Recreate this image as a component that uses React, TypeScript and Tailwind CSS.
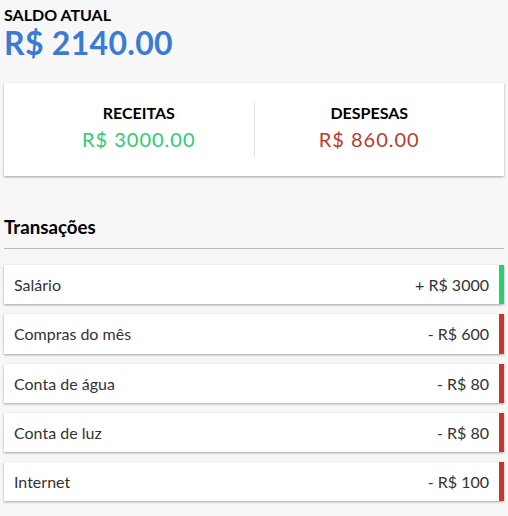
import React from "react";

const shadow = "shadow-[0_1px_3px_rgba(0,0,0,0.12),0_1px_2px_rgba(0,0,0,0.24)]";

const transactions = [
  { text: "Salário", amount: "+ R$ 3000", plus: true },
  { text: "Compras do mês", amount: "- R$ 600", plus: false },
  { text: "Conta de água", amount: "- R$ 80", plus: false },
  { text: "Conta de luz", amount: "- R$ 80", plus: false },
  { text: "Internet", amount: "- R$ 100", plus: false },
];

export default function App() {
  return (
    <div
      className="min-h-[516px] w-full bg-[#f7f7f7] px-[4px] pt-[5px] text-[#333]"
      style={{ fontFamily: "Lato, 'Open Sans', sans-serif" }}
    >
      <div className="text-[16px] font-bold uppercase leading-[1.2] text-black">Saldo atual</div>
      <div className="text-[32px] font-bold tracking-[0.3px] leading-[1.2] text-[#3a7bd5]">R$ 2140.00</div>

      <div className={`mt-[20px] flex bg-white p-[20px] ${shadow}`}>
        <div className="flex-1 border-r border-[#dedede] text-center">
          <div className="text-[16px] font-bold uppercase leading-[1.2] text-black">Receitas</div>
          <div className="my-[5px] text-[20px] tracking-[1px] leading-[1.2] text-[#2ecc71]">R$ 3000.00</div>
        </div>
        <div className="flex-1 text-center">
          <div className="text-[16px] font-bold uppercase leading-[1.2] text-black">Despesas</div>
          <div className="my-[5px] text-[20px] tracking-[1px] leading-[1.2] text-[#c0392b]">R$ 860.00</div>
        </div>
      </div>

      <div className="mt-[40px] border-b border-[#bbb] pb-[10px] text-[18.72px] font-bold leading-[1.2] text-black">
        Transações
      </div>

      <ul className="mt-[16px] flex flex-col gap-[10px]">
        {transactions.map((t) => (
          <li
            key={t.text}
            className={`flex justify-between bg-white p-[10px] text-[16px] leading-[1.2] text-[#333] ${shadow} ${
              t.plus ? "border-r-[5px] border-[#2ecc71]" : "border-r-[5px] border-[#c0392b]"
            }`}
          >
            <span>{t.text}</span>
            <span>{t.amount}</span>
          </li>
        ))}
      </ul>
    </div>
  );
}
